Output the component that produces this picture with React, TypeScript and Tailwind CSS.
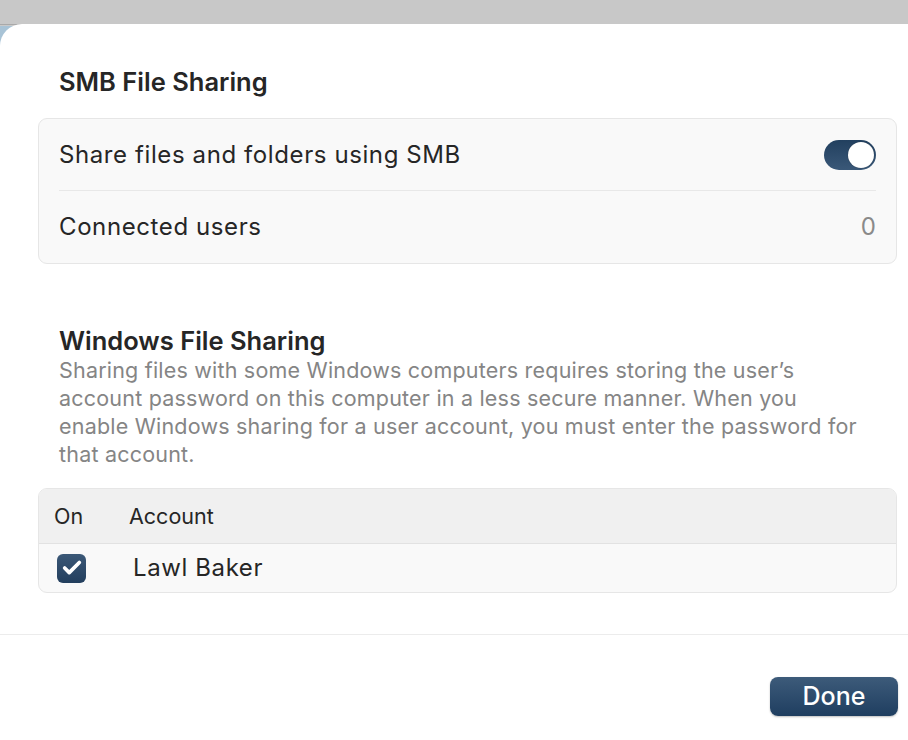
import { Check } from 'lucide-react'

const FONT = "font-['Inter','Noto_Sans',sans-serif]"

function Toggle() {
  return (
    <div className="flex h-[30px] w-[52px] items-center justify-end rounded-full bg-gradient-to-b from-[#22405f] to-[#3a5878] p-[2px]">
      <div className="h-[26px] w-[26px] rounded-full bg-white shadow-[0_0_1px_rgba(0,0,0,0.4)]" />
    </div>
  )
}

export default function App() {
  return (
    <div
      className={`${FONT} relative h-[740px] w-[908px] overflow-hidden bg-[#c9c9c9] antialiased`}
    >
      {/* window chrome behind the sheet */}
      <div className="h-[25px] border-b border-[#a9a9a9] bg-[#c8c8c8]" />
      <div className="absolute left-0 top-[26px] h-[40px] w-[20px] bg-[#a8c3d6]" />

      {/* sheet */}
      <div className="relative -mt-px h-[716px] w-full rounded-tl-[22px] bg-white">
        <div className="pl-[38px] pr-[11px]">
          <h2 className="pl-[21px] pt-[43px] text-[25.5px] font-semibold leading-[30px] text-[#262626]">
            SMB File Sharing
          </h2>

          <div className="mt-[21px] rounded-[9px] border border-[#e6e6e6] bg-[#f9f9f9] px-[20px]">
            <div className="flex h-[72px] items-center justify-between border-b border-[#e8e8e8]">
              <span className="text-[24px] tracking-[0.6px] text-[#262626]">
                Share files and folders using SMB
              </span>
              <Toggle />
            </div>
            <div className="flex h-[72px] items-center justify-between">
              <span className="text-[24px] tracking-[0.6px] text-[#262626]">Connected users</span>
              <span className="text-[24px] text-[#8a8a8a]">0</span>
            </div>
          </div>

          <h2 className="mt-[62px] pl-[21px] text-[25.5px] font-semibold leading-[30px] text-[#262626]">
            Windows File Sharing
          </h2>
          <p className="pl-[21px] pr-[12px] text-[21.5px] leading-[28px] tracking-[0.2px] text-[#858585]">
            Sharing files with some Windows computers requires storing the user’s
            <br />
            account password on this computer in a less secure manner. When you
            <br />
            enable Windows sharing for a user account, you must enter the password for
            <br />
            that account.
          </p>

          <div className="mt-[20px] overflow-hidden rounded-[9px] border border-[#e6e6e6] bg-[#f9f9f9]">
            <div className="flex h-[55px] items-center border-b border-[#e2e2e2] bg-[#f0f0f0] text-[21.5px] text-[#262626]">
              <span className="w-[90px] pl-[15px]">On</span>
              <span>Account</span>
            </div>
            <div className="flex h-[48px] items-center">
              <div className="ml-[18px] flex h-[29px] w-[29px] items-center justify-center rounded-[6px] bg-gradient-to-b from-[#3b5877] to-[#233f5e]">
                <Check className="h-[22px] w-[22px] text-white" strokeWidth={4} />
              </div>
              <span className="ml-[47px] text-[24px] tracking-[0.6px] text-[#262626]">
                Lawl Baker
              </span>
            </div>
          </div>
        </div>

        <div className="mt-[41px] border-t border-[#ececec]" />

        <div className="flex justify-end pr-[10px] pt-[42px]">
          <button className="flex h-[39px] w-[128px] items-center justify-center rounded-[8px] bg-gradient-to-b from-[#3d5b7a] to-[#1f3e60] text-[25px] font-medium text-white shadow-[0_1px_2px_rgba(0,0,0,0.25)]">
            Done
          </button>
        </div>
      </div>
    </div>
  )
}
